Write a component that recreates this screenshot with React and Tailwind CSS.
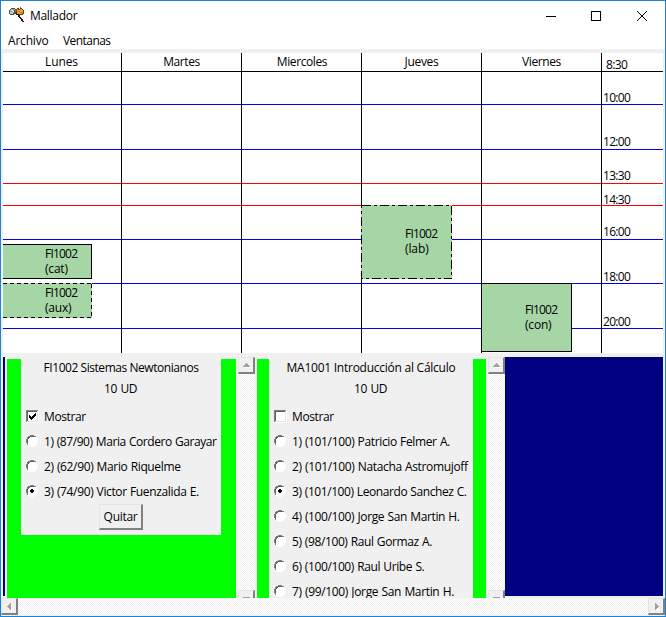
import React from "react";

const DAYS = [
  { name: "Lunes", text: "tracking-[-0.1px] pr-[3px]" },
  { name: "Martes", text: "tracking-[-0.4px] pr-[3px]" },
  { name: "Miercoles", text: "tracking-[-0.4px] pr-[2px]" },
  { name: "Jueves", text: "tracking-[-0.3px] pr-[3px]" },
  { name: "Viernes", text: "tracking-[-0.4px] pr-[3px]" },
];

const HOURS = [
  { label: "10:00", row: "h-[33px] border-[#0000ff]", text: "mb-[-6px]" },
  { label: "12:00", row: "h-[45px] border-[#0000ff]", text: "mb-[-5px]" },
  { label: "13:30", row: "h-[34px] border-[#ff0000]", text: "mb-[-5px]" },
  { label: "14:30", row: "h-[22px] border-[#ff0000]", text: "mb-[-7px]" },
  { label: "16:00", row: "h-[34px] border-[#0000ff]", text: "mb-[-5px]" },
  { label: "18:00", row: "h-[44px] border-[#0000ff]", text: "mb-[-6px]" },
  { label: "20:00", row: "h-[45px] border-[#0000ff]", text: "mb-[-6px]" },
];

const TRACK =
  "bg-[repeating-conic-gradient(#f0f0f0_0_25%,#ffffff_0_50%)] bg-[length:2px_2px]";

const RAISED =
  "border-t border-l border-t-[#e3e3e3] border-l-[#e3e3e3] border-r-2 border-b-2 border-r-[#808080] border-b-[#808080] bg-[#f0f0f0]";

function AppIcon() {
  return (
    <svg width="18" height="18" viewBox="0 0 18 18" className="shrink-0" shapeRendering="crispEdges">
      <path d="M3 1h4v1h1v5h-2v1h-4v-1h-1v-4h1v-1h1z" fill="#4a4a44" />
      <path d="M3 2h4v1h-1v3h-1v1h-3v-4h1z" fill="#b9bab0" />
      <path d="M3 3h2v1h-2zM5 4h1v1h-1zM2 5h1v1h-1zM4 6h1v1h-1z" fill="#e8e8de" />
      <path d="M5 2h1v1h-1zM3 4h1v1h-1z" fill="#85867c" />
      <path d="M9 1h2v1h1v-1h2v1h1v1h1v4h-1v1h-6v-1h-1v-5h1z" fill="#6b4514" />
      <path d="M9 2h1v1h2v-1h2v1h1v3h-1v1h-5z" fill="#f0a030" />
      <path d="M10 4h2v1h-2zM12 5h2v1h-2zM9 5h1v1h-1z" fill="#d07c18" />
      <path d="M12 0h1v1h-1zM7 3h1v2h-1z" fill="#a06a28" />
      <path d="M8 6h1v1h2v1h1v2h1v1h1v1h1v2h1v1h-2v-1h-1v-2h-1v-1h-1v-1h-1v-2h-2z" fill="#201c18" />
    </svg>
  );
}

function TitleBar() {
  return (
    <div className="flex h-[29px] items-center bg-white pl-[7px]">
      <AppIcon />
      <span className="ml-[4px] tracking-[-0.3px]">Mallador</span>
      <svg width="106" height="12" viewBox="0 0 106 12" className="mr-[15px] ml-auto" fill="none" stroke="#000" shapeRendering="crispEdges">
        <path d="M2 6.5h10" />
        <path d="M47.500 1.500h9v9h-9z" />
        <path d="M93 1l10 10M103 1l-10 10" shapeRendering="auto" />
      </svg>
    </div>
  );
}

function Timetable() {
  return (
    <div className="relative mx-[2px] h-[300px] overflow-hidden bg-white">
      <div className="flex h-[19px] border-b border-black">
        {DAYS.map((d) => (
          <div key={d.name} className={"w-[120px] text-center leading-[18px] " + d.text}>
            {d.name}
          </div>
        ))}
        <div className="pl-[3px] leading-[23px] tracking-[-0.6px]">8:30</div>
      </div>
      {HOURS.map((h) => (
        <div key={h.label} className={"flex items-end border-b pl-[600px] " + h.row}>
          <span className={"leading-[24px] tracking-[-0.7px] " + h.text}>{h.label}</span>
        </div>
      ))}
      <div className="absolute inset-0 flex">
        {DAYS.map((d, i) => (
          <div key={d.name} className={"border-r border-black " + (i === 0 ? "w-[119px]" : "w-[120px]")} />
        ))}
      </div>
      <div className="absolute top-[191px] left-[-1px] h-[35px] w-[90px] border border-black bg-[#a6d5a6] pt-px pl-[42px] leading-[15px]">
        <div className="tracking-[-0.8px]">FI1002</div>
        <div className="tracking-[-0.2px]">(cat)</div>
      </div>
      <div className="absolute top-[230px] left-[-1px] h-[35px] w-[90px] bg-[#a6d5a6] pt-[2px] pl-[43px] leading-[15px]">
        <svg className="absolute inset-0" width="90" height="35" fill="none" stroke="#000" shapeRendering="crispEdges">
          <path d="M1 .5h89M89.500 1v34M1 34.500h89" strokeDasharray="4 3" />
        </svg>
        <div className="tracking-[-0.8px]">FI1002</div>
        <div className="tracking-[-0.2px]">(aux)</div>
      </div>
      <div className="absolute top-[152px] left-[358px] h-[74px] w-[91px] bg-[#a6d5a6] pt-[21px] pl-[44px] leading-[15px]">
        <svg className="absolute inset-0" width="91" height="74" fill="none" stroke="#000" shapeRendering="crispEdges">
          <path d="M.5.5h90v73h-90z" strokeDasharray="9 3 3 3" />
        </svg>
        <div className="tracking-[-0.8px]">FI1002</div>
        <div className="tracking-[-0.1px]">(lab)</div>
      </div>
      <div className="absolute top-[230px] left-[478px] h-[69px] w-[91px] border border-black bg-[#a6d5a6] pt-[18px] pl-[43px] leading-[15px]">
        <div className="tracking-[-0.8px]">FI1002</div>
        <div className="tracking-[-0.2px]">(con)</div>
      </div>
    </div>
  );
}

function ArrowButton({ path }) {
  return (
    <div className={"size-[17px] shrink-0 " + RAISED}>
      <svg width="14" height="14" viewBox="0 0 14 14" shapeRendering="crispEdges">
        <path d={path} fill="#fff" transform="translate(1 1)" />
        <path d={path} fill="#a0a0a0" />
      </svg>
    </div>
  );
}

function VerticalScroll() {
  return (
    <div className={"mx-[2px] mt-[-2px] flex h-[241px] w-[17px] shrink-0 flex-col justify-between overflow-hidden " + TRACK}>
      <ArrowButton path="M7 5h1v1h1v1h1v1h1v1h-7v-1h1v-1h1v-1h1z" />
      <div className="h-[8px] border-t border-l border-r-2 border-t-[#e3e3e3] border-l-[#e3e3e3] border-r-[#808080] bg-[#f0f0f0] pt-[6px] pl-[4px]">
        <div className="h-px w-[7px] bg-[#a0a0a0]" />
      </div>
    </div>
  );
}

function Check({ on }) {
  return (
    <svg width="13" height="13" viewBox="0 0 13 13" className="shrink-0" shapeRendering="crispEdges">
      <path d="M0 0h13v13h-13z" fill="#fff" />
      <path d="M0 0h12v1h-11v11h-1z" fill="#808080" />
      <path d="M1 1h10v1h-9v9h-1z" fill="#606060" />
      <path d="M11 1h1v11h-11v-1h10z" fill="#e3e3e3" />
      {on && <path d="M3 5h1v1h1v1h1v-1h1v-1h1v-1h1v-1h1v3h-1v1h-1v1h-1v1h-1v1h-1v-1h-1v-1h-1z" fill="#000" />}
    </svg>
  );
}

function Radio({ on }) {
  return (
    <svg width="12" height="12" viewBox="0 0 12 12" className="mb-[2px] shrink-0" shapeRendering="crispEdges">
      <path d="M4 0h4v1h2v1h1v2h1v4h-1v2h-1v1h-2v1h-4v-1h-2v-1h-1v-2h-1v-4h1v-2h1v-1h2z" fill="#fff" />
      <path d="M4 0h4v1h2v1h-2v-1h-4v1h-2v2h-1v4h1v2h-1v-2h-1v-4h1v-2h1v-1h2z" fill="#808080" />
      <path d="M4 1h4v1h-4zM2 2h2v1h-1v1h-1zM1 4h1v4h-1z" fill="#606060" />
      {on && <path d="M5 4h2v1h1v2h-1v1h-2v-1h-1v-2h1z" fill="#000" />}
    </svg>
  );
}

function Course({ title, titleText, units, shown, selected, options, panel, button }) {
  return (
    <div className={"flex h-[239px] shrink-0 items-start overflow-hidden bg-[#00ff00] " + panel}>
      <div className="w-full bg-[#f0f0f0]">
        <div className={"h-[19px] text-center leading-[17px] whitespace-nowrap " + titleText}>{title}</div>
        <div className="mt-[2px] h-[19px] pr-px text-center leading-[17px] tracking-[-0.5px] [word-spacing:1px]">{units}</div>
        <div className="mt-[5px] flex h-[25px] items-center pl-[5px] leading-[25px]">
          <Check on={shown} />
          <span className="ml-[5px] tracking-[-0.4px]">Mostrar</span>
        </div>
        {options.map((o, i) => (
          <div key={o.label} className="flex h-[25px] items-center pl-[5px] leading-[25px] whitespace-nowrap">
            <Radio on={selected === i} />
            <span className={"ml-[6px] [word-spacing:0.5px] " + o.text}>{o.label}</span>
          </div>
        ))}
        {button && (
          <div className="flex h-[31px] justify-center">
            <button className={"h-[26px] w-[44px] text-center leading-[23px] tracking-[-0.3px] " + RAISED}>Quitar</button>
          </div>
        )}
      </div>
    </div>
  );
}

export default function App() {
  return (
    <div className="flex h-[617px] w-[666px] flex-col overflow-hidden border border-[#1883d7] bg-[#f0f0f0] font-['Open_Sans',sans-serif] text-[12px] text-black">
      <TitleBar />
      <div className="flex h-[19px] bg-white pl-[7px] leading-[21px]">
        <span className="w-[55px] tracking-[-0.2px]">Archivo</span>
        <span className="tracking-[-0.55px]">Ventanas</span>
      </div>
      <div className="h-[4px] shrink-0" />
      <Timetable />
      <div className="flex h-[245px] pt-[4px] pl-[2px]">
        <div className="h-[239px] w-[2px] bg-[#000080]" />
        <div className="flex pt-[2px] pl-[2px]">
          <Course
            title="FI1002 Sistemas Newtonianos"
            titleText="tracking-[-0.45px]"
            units="10 UD"
            shown
            selected={2}
            panel="w-[229px] pr-[15px] pl-[14px]"
            options={[
              { label: "1) (87/90) Maria Cordero Garayar", text: "tracking-[-0.43px]" },
              { label: "2) (62/90) Mario Riquelme", text: "tracking-[-0.36px]" },
              { label: "3) (74/90) Victor Fuenzalida E.", text: "tracking-[-0.36px]" },
            ]}
            button
          />
          <VerticalScroll />
          <Course
            title="MA1001 Introducción al Cálculo"
            titleText="tracking-[-0.25px]"
            units="10 UD"
            selected={2}
            panel="w-[229px] pr-[13px] pl-[12px]"
            options={[
              { label: "1) (101/100) Patricio Felmer A.", text: "tracking-[-0.36px]" },
              { label: "2) (101/100) Natacha Astromujoff", text: "tracking-[-0.35px]" },
              { label: "3) (101/100) Leonardo Sanchez C.", text: "tracking-[-0.42px]" },
              { label: "4) (100/100) Jorge San Martin H.", text: "tracking-[-0.37px]" },
              { label: "5) (98/100) Raul Gormaz A.", text: "tracking-[-0.39px]" },
              { label: "6) (100/100) Raul Uribe S.", text: "tracking-[-0.39px]" },
              { label: "7) (99/100) Jorge San Martin H.", text: "tracking-[-0.34px] -mt-px" },
            ]}
          />
          <div className="mr-[-2px] flex">
            <VerticalScroll />
          </div>
        </div>
        <div className="h-[239px] w-[158px] bg-[#000080]" />
      </div>
      <div className={"flex h-[17px] justify-between " + TRACK}>
        <ArrowButton path="M9 4v7h-1v-1h-1v-1h-1v-1h-1v-1h1v-1h1v-1h1v-1z" />
        <ArrowButton path="M6 4v7h1v-1h1v-1h1v-1h1v-1h-1v-1h-1v-1h-1v-1z" />
      </div>
    </div>
  );
}
